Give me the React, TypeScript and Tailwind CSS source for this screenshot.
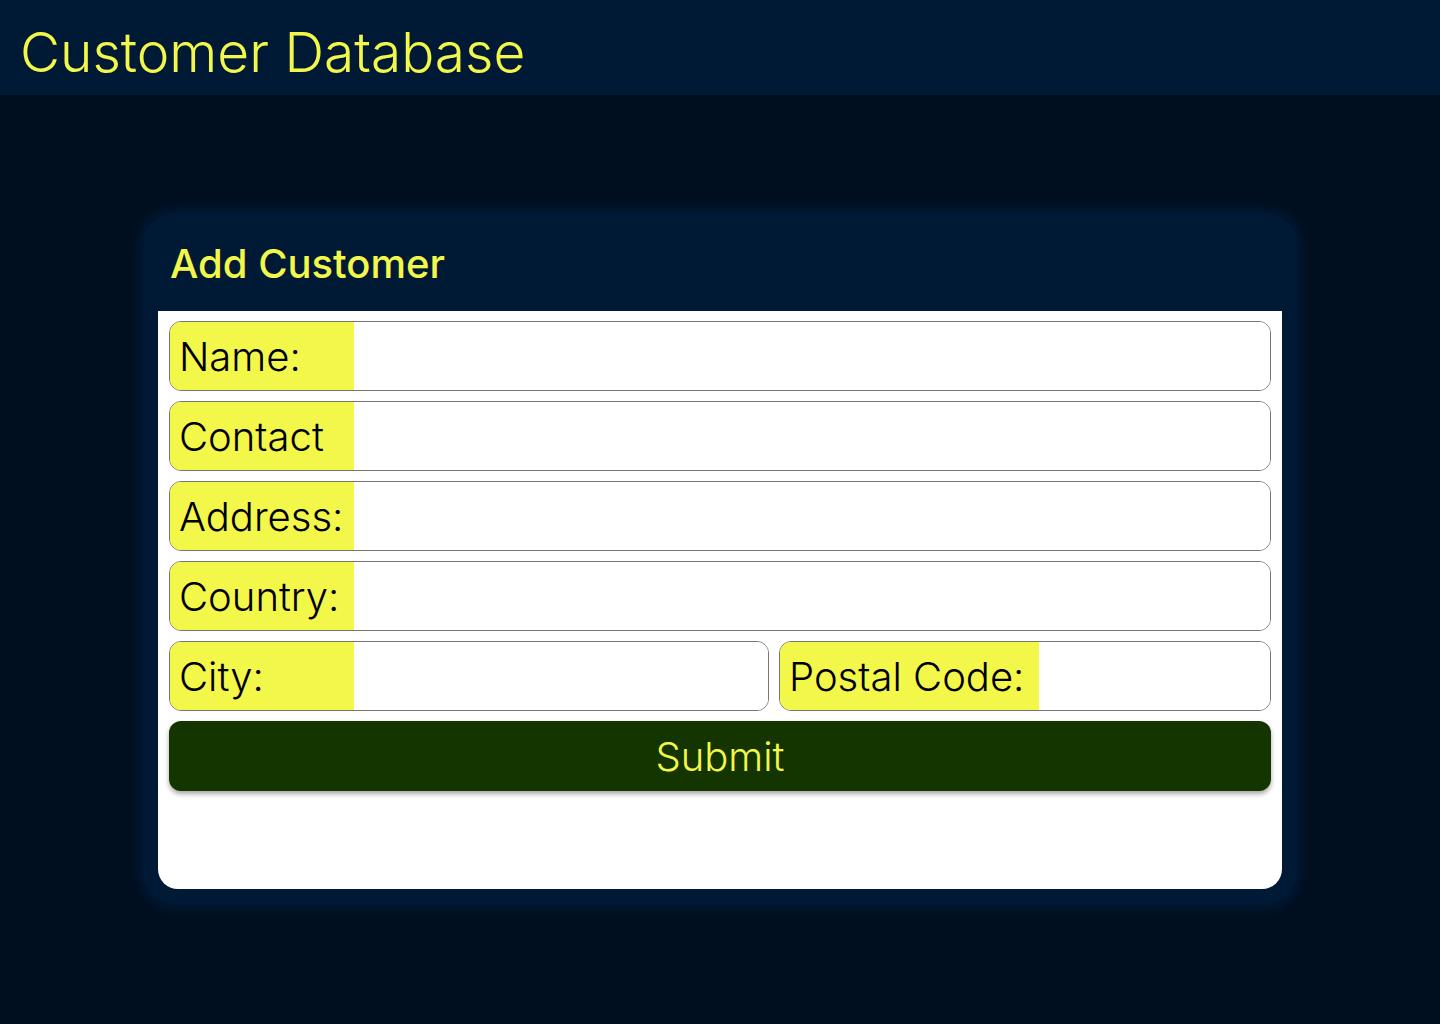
import { useState } from 'react';

const FONT = "font-['Inter','Noto_Sans',sans-serif]";

type Field = { key: string; label: string };

const fullRows: Field[] = [
  { key: 'name', label: 'Name:' },
  { key: 'contact', label: 'Contact' },
  { key: 'address', label: 'Address:' },
  { key: 'country', label: 'Country:' },
];

function Row({
  label,
  labelWidth,
  value,
  onChange,
  className = '',
}: {
  label: string;
  labelWidth: string;
  value: string;
  onChange: (v: string) => void;
  className?: string;
}) {
  return (
    <label
      className={`flex h-[70px] overflow-hidden rounded-xl border border-[#757575] bg-white ${className}`}
    >
      <span
        className={`flex shrink-0 items-center bg-[#f3f74a] pl-[9px] pt-[2px] text-[40px] font-light leading-none text-black ${labelWidth}`}
      >
        {label}
      </span>
      <input
        className="min-w-0 flex-1 bg-white px-3 text-[32px] text-black outline-none"
        value={value}
        onChange={(e) => onChange(e.target.value)}
      />
    </label>
  );
}

export default function App() {
  const [form, setForm] = useState<Record<string, string>>({
    name: '',
    contact: '',
    address: '',
    country: '',
    city: '',
    postal: '',
  });

  const set = (k: string) => (v: string) => setForm({ ...form, [k]: v });

  return (
    <div className={`min-h-[1024px] bg-[#000f1f] ${FONT}`}>
      {/* header */}
      <header className="flex h-[95px] items-center bg-[#001a36] px-[20px] pt-[10px]">
        <h1 className="text-[55px] font-light leading-none text-[#f3f74a]">Customer Database</h1>
      </header>

      {/* card */}
      <main className="flex justify-center pt-[118px]">
        <div className="flex w-[1154px] flex-col rounded-[32px] bg-[#001a36] px-[15px] pb-4 shadow-[0_0_12px_4px_#001a36]">
          <div className="flex h-[98px] items-center px-3 pt-1">
            <h2 className="text-[40px] font-medium leading-none text-[#f3f74a]">Add Customer</h2>
          </div>

          <form
            className="flex h-[578px] flex-col gap-[10px] rounded-b-[20px] bg-white px-[11px] pt-[10px]"
            onSubmit={(e) => e.preventDefault()}
          >
            {fullRows.map((f) => (
              <Row
                key={f.key}
                label={f.label}
                labelWidth="w-[184px]"
                value={form[f.key]}
                onChange={set(f.key)}
              />
            ))}

            <div className="flex gap-[10px]">
              <Row
                className="w-[600px]"
                label="City:"
                labelWidth="w-[184px]"
                value={form.city}
                onChange={set('city')}
              />
              <Row
                className="flex-1"
                label="Postal Code:"
                labelWidth="w-[259px]"
                value={form.postal}
                onChange={set('postal')}
              />
            </div>

            <button
              type="submit"
              className="flex h-[70px] items-center justify-center rounded-xl bg-[#143500] pt-[2px] text-[40px] font-light leading-none text-[#f3f74a] shadow-[0_3px_5px_rgba(0,0,0,0.35)]"
            >
              Submit
            </button>
          </form>
        </div>
      </main>
    </div>
  );
}
